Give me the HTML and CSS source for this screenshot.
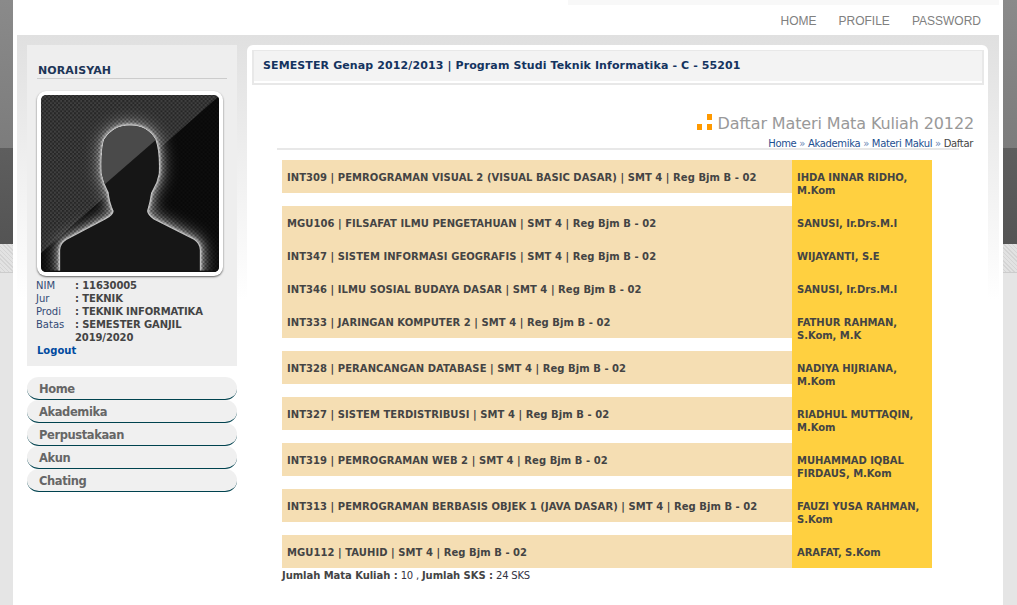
FILE: index.html
```html
<!DOCTYPE html>
<html lang="id">
<head>
<meta charset="utf-8">
<title>Daftar Materi Mata Kuliah</title>
<link rel="stylesheet" href="styles.css">
</head>
<body>
<div class="page">
  <header class="topbar">
    <div class="topstrip"></div>
    <nav class="topnav"><a>HOME</a><a>PROFILE</a><a>PASSWORD</a></nav>
  </header>
  <div class="content">
    <aside class="sidebar">
      <section class="profile">
        <h2 class="name">NORAISYAH</h2>
        <div class="avatar">
          <svg class="avatar-img" viewBox="33 33 532 522" preserveAspectRatio="none" aria-hidden="true">
            <defs>
              <pattern id="dots" width="12" height="12" patternUnits="userSpaceOnUse">
                <rect x="0" y="0" width="6" height="6" fill="#000" opacity=".42"/>
                <rect x="6" y="6" width="6" height="6" fill="#000" opacity=".42"/>
              </pattern>
              <filter id="glowWide" x="-40%" y="-40%" width="180%" height="180%"><feGaussianBlur stdDeviation="20"/></filter>
              <filter id="glowMid" x="-30%" y="-30%" width="160%" height="160%"><feGaussianBlur stdDeviation="9"/></filter>
              <filter id="glowNear" x="-20%" y="-20%" width="140%" height="140%"><feGaussianBlur stdDeviation="3"/></filter>
              <clipPath id="bust"><path d="M90 552V490Q92 470 110 460L225 400Q250 388 250 375Q238 350 235 320Q225 300 222 290L215 265Q212 200 222 165Q250 123 298 123Q350 123 375 165Q388 200 385 265L378 290Q368 310 362 322Q358 350 350 375Q352 388 370 400L490 460Q506 470 508 490V552Z"/></clipPath>
            </defs>
            <rect x="33" y="33" width="532" height="522" fill="#414141"/>
            <path d="M565 36L33 500V555H565Z" fill="#0e0e0e"/>
            <path filter="url(#glowWide)" fill="#888" stroke="#888" stroke-width="34" d="M90 552V490Q92 470 110 460L225 400Q250 388 250 375Q238 350 235 320Q225 300 222 290L215 265Q212 200 222 165Q250 123 298 123Q350 123 375 165Q388 200 385 265L378 290Q368 310 362 322Q358 350 350 375Q352 388 370 400L490 460Q506 470 508 490V552Z"/>
            <path filter="url(#glowMid)" fill="#b0b0b0" stroke="#b0b0b0" stroke-width="14" d="M90 552V490Q92 470 110 460L225 400Q250 388 250 375Q238 350 235 320Q225 300 222 290L215 265Q212 200 222 165Q250 123 298 123Q350 123 375 165Q388 200 385 265L378 290Q368 310 362 322Q358 350 350 375Q352 388 370 400L490 460Q506 470 508 490V552Z"/>
            <rect x="33" y="33" width="532" height="522" fill="url(#dots)"/>
            <path filter="url(#glowNear)" fill="#ddd" stroke="#ddd" stroke-width="7" d="M90 552V490Q92 470 110 460L225 400Q250 388 250 375Q238 350 235 320Q225 300 222 290L215 265Q212 200 222 165Q250 123 298 123Q350 123 375 165Q388 200 385 265L378 290Q368 310 362 322Q358 350 350 375Q352 388 370 400L490 460Q506 470 508 490V552Z"/>
            <rect x="33" y="33" width="532" height="522" fill="#161616" clip-path="url(#bust)"/>
            <path d="M200 100H400V145L222 298H200Z" fill="#4a4a4a" clip-path="url(#bust)"/>
            <rect x="33" y="551" width="532" height="4" fill="#111"/>
          </svg>
        </div>
        <dl class="info">
          <dt>NIM</dt><dd>: 11630005</dd>
          <dt>Jur</dt><dd>: TEKNIK</dd>
          <dt>Prodi</dt><dd>: TEKNIK INFORMATIKA</dd>
          <dt>Batas</dt><dd>: SEMESTER GANJIL 2019/2020</dd>
        </dl>
        <a class="logout">Logout</a>
      </section>
      <nav class="menu">
        <a class="menu-item">Home</a>
        <a class="menu-item">Akademika</a>
        <a class="menu-item">Perpustakaan</a>
        <a class="menu-item">Akun</a>
        <a class="menu-item">Chating</a>
      </nav>
    </aside>
    <main class="main">
      <div class="semester">SEMESTER Genap 2012/2013 | Program Studi Teknik Informatika - C - 55201</div>
      <div class="heading">
        <h1 class="title">
          <svg class="title-icon" viewBox="0 0 15 16" aria-hidden="true"><rect x="0" y="10" width="5" height="6" fill="#f90"/><rect x="10" y="0" width="5" height="6" fill="#f90"/><rect x="10" y="10" width="5" height="6" fill="#f90"/></svg>
          Daftar Materi Mata Kuliah 20122
        </h1>
        <div class="crumbs"><a>Home</a> <i>»</i> <a>Akademika</a> <i>»</i> <a>Materi Makul</a> <i>»</i> <span>Daftar</span></div>
      </div>
      <div class="courses">
        <div class="course">INT309 | PEMROGRAMAN VISUAL 2 (VISUAL BASIC DASAR) | SMT 4 | Reg Bjm B - 02</div><div class="lecturer">IHDA INNAR RIDHO, M.Kom</div>
        <div class="course">MGU106 | FILSAFAT ILMU PENGETAHUAN | SMT 4 | Reg Bjm B - 02</div><div class="lecturer">SANUSI, Ir.Drs.M.I</div>
        <div class="course">INT347 | SISTEM INFORMASI GEOGRAFIS | SMT 4 | Reg Bjm B - 02</div><div class="lecturer">WIJAYANTI, S.E</div>
        <div class="course">INT346 | ILMU SOSIAL BUDAYA DASAR | SMT 4 | Reg Bjm B - 02</div><div class="lecturer">SANUSI, Ir.Drs.M.I</div>
        <div class="course">INT333 | JARINGAN KOMPUTER 2 | SMT 4 | Reg Bjm B - 02</div><div class="lecturer">FATHUR RAHMAN, S.Kom, M.K</div>
        <div class="course">INT328 | PERANCANGAN DATABASE | SMT 4 | Reg Bjm B - 02</div><div class="lecturer">NADIYA HIJRIANA, M.Kom</div>
        <div class="course">INT327 | SISTEM TERDISTRIBUSI | SMT 4 | Reg Bjm B - 02</div><div class="lecturer">RIADHUL MUTTAQIN, M.Kom</div>
        <div class="course">INT319 | PEMROGRAMAN WEB 2 | SMT 4 | Reg Bjm B - 02</div><div class="lecturer">MUHAMMAD IQBAL FIRDAUS, M.Kom</div>
        <div class="course">INT313 | PEMROGRAMAN BERBASIS OBJEK 1 (JAVA DASAR) | SMT 4 | Reg Bjm B - 02</div><div class="lecturer">FAUZI YUSA RAHMAN, S.Kom</div>
        <div class="course">MGU112 | TAUHID | SMT 4 | Reg Bjm B - 02</div><div class="lecturer">ARAFAT, S.Kom</div>
      </div>
      <p class="totals"><b>Jumlah Mata Kuliah :</b> 10 , <b>Jumlah SKS :</b> 24 SKS</p>
    </main>
  </div>
</div>
</body>
</html>
```
FILE: styles.css
```css
* { box-sizing: border-box; }
html, body { margin: 0; height: 100%; }
body {
  font-family: "DejaVu Sans", Verdana, sans-serif;
  font-size: 10px;
  line-height: 13px;
  color: #444;
  background-color: #e5e5e5;
  background-image:
    linear-gradient(#e5e5e5, #e5e5e5),
    linear-gradient(#ccc, #ccc),
    repeating-linear-gradient(45deg, #d4d4d4 0 1px, #e2e2e2 1px 3px),
    linear-gradient(#5e5e5e, #545454),
    linear-gradient(#8a8a8a, #7c7c7c);
  background-repeat: no-repeat;
  background-size: 100% 100%, 100% 1px, 100% 28px, 100% 96px, 100% 148px;
  background-position: 0 273px, 0 272px, 0 244px, 0 148px, 0 0;
  overflow: hidden;
}
.page {
  width: 990px;
  min-height: 605px;
  margin-left: 13px;
  padding-left: 4px;
  padding-right: 4px;
  background: #fff;
}
.topbar { height: 35px; position: relative; }
.topstrip { height: 5px; margin-left: 551px; background: #f8f8f8; }
.topnav {
  display: flex;
  justify-content: flex-end;
  gap: 22px;
  padding: 9px 18px 0 0;
  font-family: "Liberation Sans", Arial, sans-serif;
  font-size: 12px;
  line-height: 14px;
  color: #808080;
}
.content {
  display: flex;
  gap: 10px;
  padding: 10px 11px 0 10px;
  height: 570px;
  background: linear-gradient(#e0e0e0, #fff 265px);
}
.sidebar { width: 210px; flex: none; }
.profile {
  height: 321px;
  padding: 17px 10px 0 10px;
  background: #eee;
}
.name {
  margin: 0;
  height: 17px;
  padding-left: 1px;
  border-bottom: 1px solid #ccc;
  font-size: 11px;
  line-height: 17px;
  letter-spacing: .1px;
  font-weight: bold;
  color: #1d3557;
}
.avatar {
  width: 186px;
  height: 185px;
  margin-top: 12px;
  padding: 4px;
  background: #fff;
  border-radius: 9px;
  box-shadow: 0 1px 2px rgba(0, 0, 0, .6);
}
.avatar-img { display: block; width: 178px; height: 177px; border-radius: 5px; }
.info {
  display: grid;
  grid-template-columns: 39px 1fr;
  margin: 3px 0 0 -1px;
}
.info dt { color: #334a75; }
.info dd { margin: 0; font-weight: bold; color: #444; letter-spacing: -.12px; }
.logout {
  display: block;
  font-weight: bold;
  color: #004a9f;
}
.menu { margin-top: 11px; }
.menu-item {
  display: block;
  height: 23px;
  padding-left: 12px;
  background: #f0f0f0;
  border-bottom: 1px solid #00424f;
  border-radius: 12px / 11px;
  font-size: 11.5px;
  line-height: 24px;
  letter-spacing: -.4px;
  font-weight: bold;
  color: #666;
}
.main {
  width: 741px;
  flex: none;
  padding: 5px 4px 0 5px;
  background: #fff;
  border-radius: 6px 6px 0 0;
}
.semester {
  height: 35px;
  padding-left: 9px;
  background: #f3f3f3;
  border: 2px solid #e8e8e8;
  border-top-width: 1px;
  box-shadow: inset 0 -2px 0 #fff;
  font-size: 11px;
  line-height: 30px;
  letter-spacing: .11px;
  font-weight: bold;
  color: #14335f;
}
.heading {
  margin-left: 25px;
  width: 682px;
  height: 65px;
  border-bottom: 2px solid #e8e8e8;
  position: relative;
}
.title {
  position: absolute;
  top: 28px;
  right: -15px;
  margin: 0;
  display: flex;
  align-items: center;
  gap: 6px;
  font-size: 16px;
  line-height: 22px;
  letter-spacing: -.13px;
  font-weight: normal;
  color: #999;
  white-space: nowrap;
}
.title-icon { width: 15px; height: 16px; flex: none; margin-top: -5px; }
.crumbs {
  position: absolute;
  top: 52px;
  right: -14px;
  white-space: nowrap;
  letter-spacing: -.33px;
  color: #1d4f91;
}
.crumbs i { font-style: normal; color: #6a87b5; }
.crumbs span { color: #444; }
.courses {
  display: grid;
  grid-template-columns: 510px 140px;
  align-items: start;
  margin: 10px 0 0 30px;
  font-weight: bold;
  color: #444;
}
.course { padding: 11px 5px 9px; background: #f5deb3; white-space: nowrap; overflow: hidden; letter-spacing: .05px; }
.lecturer { padding: 11px 5px 9px; background: #ffd040; align-self: stretch; letter-spacing: -.05px; }
.totals { margin: 1px 0 0 30px; font-size: 10px; color: #334; letter-spacing: -.2px; }
.totals b { color: #444; letter-spacing: -.05px; }
```
